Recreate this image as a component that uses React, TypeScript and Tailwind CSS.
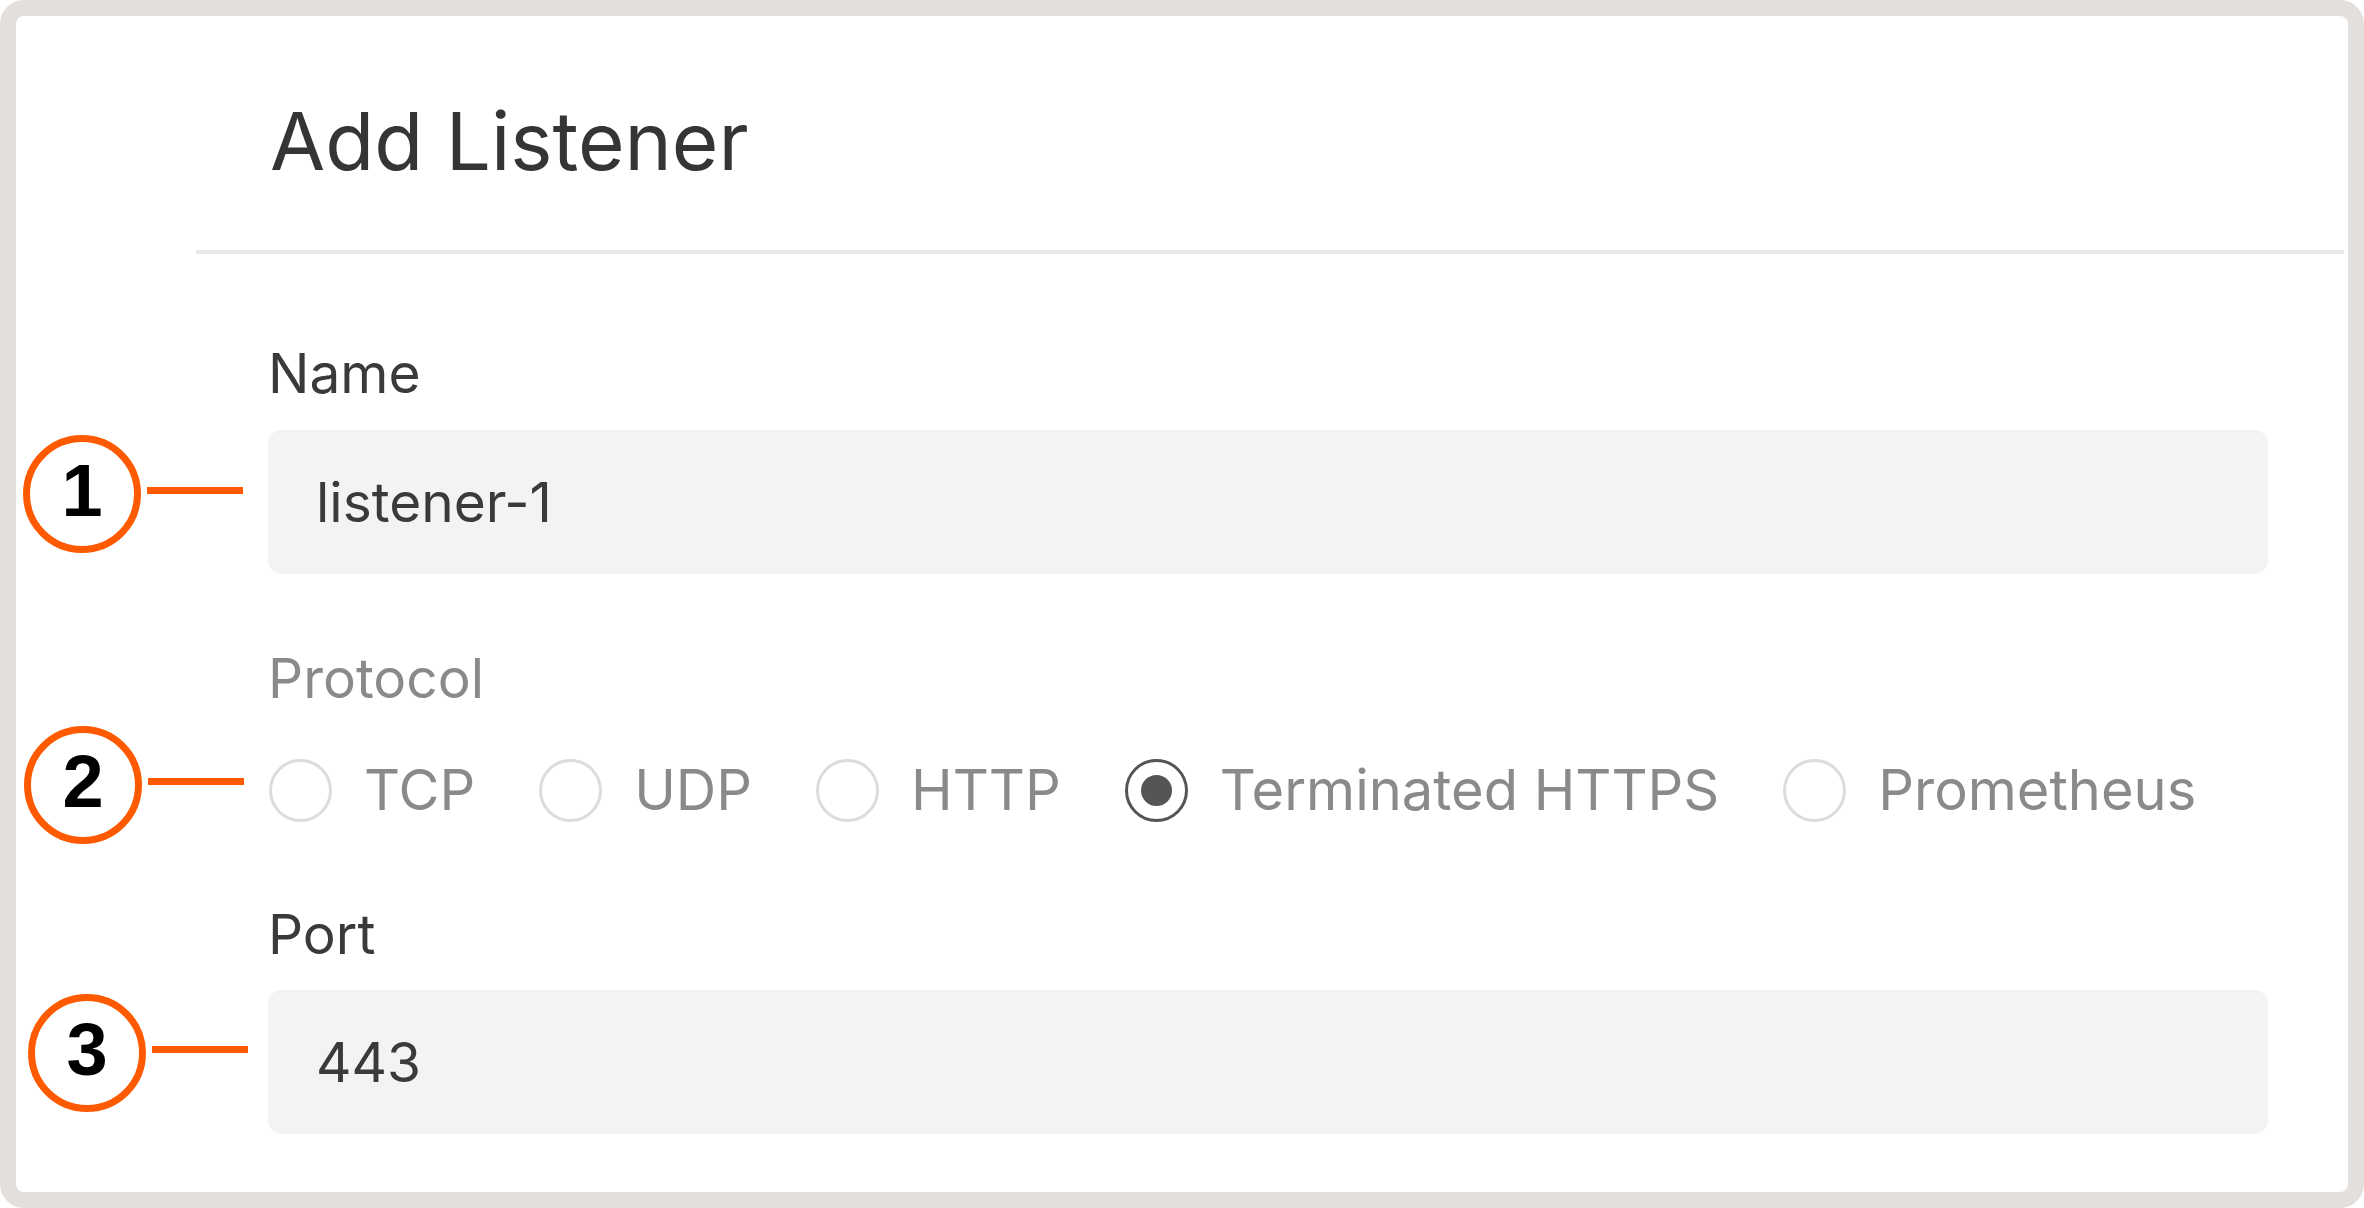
import type { ReactNode } from 'react';

const protocols = ['TCP', 'UDP', 'HTTP', 'Terminated HTTPS', 'Prometheus'];

function Marker({ n, shift = '' }: { n: string; shift?: string }) {
  return (
    <div className="flex h-0 w-[252px] shrink-0 items-center">
      <div className={`flex items-center ${shift}`}>
        <div className="flex h-[118px] w-[118px] items-center justify-center rounded-full border-[7px] border-[#ff5a00] bg-white">
          <span className="mb-[6px] font-['Liberation_Sans',Arial,sans-serif] text-[74px] font-bold leading-none text-black">
            {n}
          </span>
        </div>
        <div className="mb-[8px] ml-[6px] h-[7px] w-[96px] bg-[#ff5a00]" />
      </div>
    </div>
  );
}

function Row({ marker, children }: { marker: ReactNode; children: ReactNode }) {
  return (
    <div className="flex items-center">
      {marker}
      <div className="mr-[80px] flex-1">{children}</div>
    </div>
  );
}

function TextField({ value }: { value: string }) {
  return (
    <div className="flex h-[144px] items-center rounded-[14px] bg-[#f3f3f3] pl-[48px] text-[55px] leading-none text-[#3a3a3a]">
      {value}
    </div>
  );
}

function Radio({ label, checked }: { label: string; checked?: boolean }) {
  return (
    <label className="flex items-center gap-[32px]">
      {checked ? (
        <span className="flex h-[63px] w-[63px] items-center justify-center rounded-full border-[3px] border-[#555555]">
          <span className="h-[31px] w-[31px] rounded-full bg-[#555555]" />
        </span>
      ) : (
        <span className="h-[63px] w-[63px] rounded-full border-[3px] border-[#dcdcdc]" />
      )}
      <span className="text-[56px] leading-none text-[#8a8a8a]">{label}</span>
    </label>
  );
}

export default function App() {
  return (
    <div className="h-[1208px] w-[2364px] bg-white">
      <div className="h-full w-full rounded-[24px] border-[16px] border-[#e3dfdd] bg-white font-['Inter','Noto_Sans',sans-serif]">
        <div className="pl-[254px] pt-[85px]">
          <h1 className="text-[80px] leading-none text-[#353535]">Add Listener</h1>
        </div>
        <div className="ml-[180px] mr-[4px] mt-[69px] h-[4px] bg-[#e8e8e8]" />

        <div className="mt-[92px] pl-[252px] text-[55px] leading-none text-[#3a3a3a]">Name</div>
        <div className="mt-[29px]">
          <Row marker={<Marker n="1" shift="ml-[7px] -translate-y-[8px]" />}>
            <TextField value="listener-1" />
          </Row>
        </div>

        <div className="mt-[77px] pl-[252px] text-[55px] leading-none text-[#8a8a8a]">Protocol</div>
        <div className="mt-[52px]">
          <Row marker={<Marker n="2" shift="ml-[8px] -translate-y-[5px]" />}>
            <div className="flex h-[64px] items-center gap-[64px] pl-[1px]">
              {protocols.map((p) => (
                <Radio key={p} label={p} checked={p === 'Terminated HTTPS'} />
              ))}
            </div>
          </Row>
        </div>

        <div className="mt-[85px] pl-[252px] text-[55px] leading-none text-[#3a3a3a]">Port</div>
        <div className="mt-[28px]">
          <Row marker={<Marker n="3" shift="ml-[12px] -translate-y-[9px]" />}>
            <TextField value="443" />
          </Row>
        </div>
      </div>
    </div>
  );
}
